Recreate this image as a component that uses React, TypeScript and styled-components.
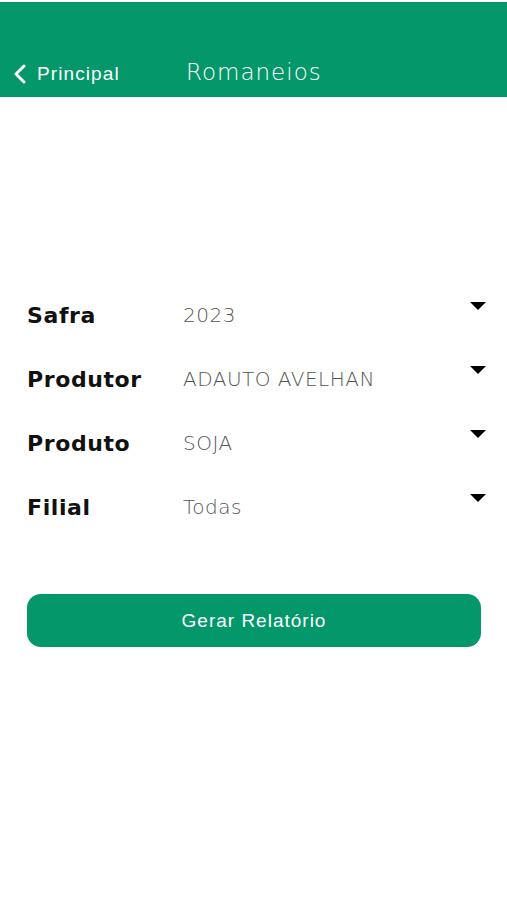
import React from 'react';
import styled, { createGlobalStyle } from 'styled-components';

const GlobalStyle = createGlobalStyle`
    html, body {
        margin: 0;
        padding: 0;
        background: #ffffff;
    }
    body {
        font-family: "DejaVu Sans", "Liberation Sans", sans-serif;
    }
`;

const Page = styled.div`
    width: 507px;
    min-height: 900px;
    background: #ffffff;
    display: flex;
    flex-direction: column;
`;

const Header = styled.header`
    height: 95px;
    margin-top: 2px;
    background: #03976a;
    display: flex;
    align-items: flex-end;
    padding: 0 0 12px 12px;
    box-sizing: border-box;
`;

const BackButton = styled.button`
    display: flex;
    align-items: center;
    gap: 9px;
    background: none;
    border: none;
    padding: 0;
    color: #ffffff;
    font-family: "Liberation Sans", sans-serif;
    font-size: 19px;
    letter-spacing: 1.1px;
    cursor: pointer;
    width: 174px;
`;

const Title = styled.h1`
    margin: 0;
    font-family: "DejaVu Sans", sans-serif;
    font-weight: 200;
    font-size: 23px;
    letter-spacing: 1px;
    color: #ffffff;
    line-height: 1;
    padding-bottom: 1px;
`;

const Form = styled.div`
    display: flex;
    flex-direction: column;
    gap: 32px;
    padding: 202px 21px 0 27px;
`;

const Row = styled.div`
    display: flex;
    align-items: center;
    height: 32px;
`;

const Label = styled.span`
    width: 156px;
    font-family: "DejaVu Sans", sans-serif;
    font-weight: 700;
    font-size: 22px;
    letter-spacing: 0.6px;
    color: #111111;
`;

const Value = styled.span`
    flex: 1;
    font-family: "DejaVu Sans", sans-serif;
    font-weight: 200;
    font-size: 20px;
    letter-spacing: 0.5px;
    color: #555555;
`;

const Caret = styled.svg`
    align-self: flex-start;
    margin-top: 3px;
`;

const SubmitButton = styled.button`
    margin: 71px 26px 0 27px;
    height: 53px;
    border: none;
    border-radius: 14px;
    background: #03976a;
    color: #ffffff;
    font-family: "Liberation Sans", sans-serif;
    font-size: 19px;
    letter-spacing: 1px;
    cursor: pointer;
`;

const fields = [
    { label: 'Safra', value: '2023' },
    { label: 'Produtor', value: 'ADAUTO AVELHAN' },
    { label: 'Produto', value: 'SOJA' },
    { label: 'Filial', value: 'Todas' },
];

export default function App() {
    return (
        <Page>
            <GlobalStyle />
            <Header>
                <BackButton>
                    <svg width="16" height="20" viewBox="0 0 16 20">
                        <path d="M12 2 L4 10 L12 18" fill="none" stroke="#ffffff" strokeWidth="3" strokeLinecap="round" strokeLinejoin="round" />
                    </svg>
                    Principal
                </BackButton>
                <Title>Romaneios</Title>
            </Header>
            <Form>
                {fields.map((f) => (
                    <Row key={f.label}>
                        <Label>{f.label}</Label>
                        <Value>{f.value}</Value>
                        <Caret width="16" height="8" viewBox="0 0 16 8">
                            <path d="M0 0 L16 0 L8 8 Z" fill="#000000" />
                        </Caret>
                    </Row>
                ))}
            </Form>
            <SubmitButton>Gerar Relatório</SubmitButton>
        </Page>
    );
}
